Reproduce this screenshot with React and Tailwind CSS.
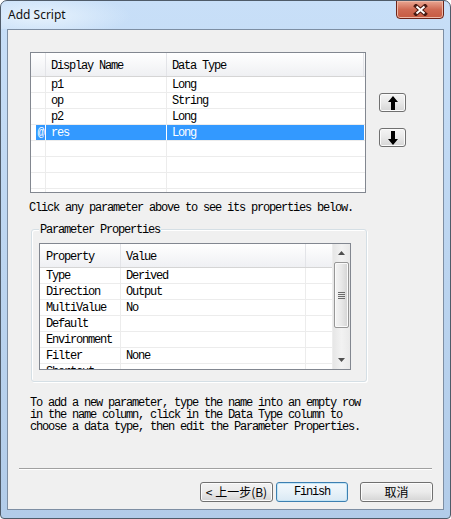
const mono = "font-['Liberation_Mono','Noto_Sans_CJK_SC',monospace] text-[12px] tracking-[-1.2px] text-black"

const params = [
  { name: 'p1', type: 'Long' },
  { name: 'op', type: 'String' },
  { name: 'p2', type: 'Long' },
  { name: 'res', type: 'Long', selected: true },
  {},
  {},
  {},
  {},
]

const props = [
  ['Type', 'Derived'],
  ['Direction', 'Output'],
  ['MultiValue', 'No'],
  ['Default', ''],
  ['Environment', ''],
  ['Filter', 'None'],
  ['Shortcut', ''],
]

function Arrow({ down }) {
  return (
    <svg width="10" height="14" viewBox="0 0 10 14" className={down ? 'rotate-180' : ''}>
      <polygon points="5,0 10,6 7,6 7,14 3,14 3,6 0,6" fill="#000" />
    </svg>
  )
}

function MoveButton({ down }) {
  return (
    <div className="w-[27px] h-[19px] rounded-[3px] border border-[#707070] bg-linear-to-b from-[#f4f4f4] via-[#e8e8e8] to-[#d6d6d6] shadow-[inset_0_0_0_1px_#fbfbfb] flex items-center justify-center">
      <Arrow down={down} />
    </div>
  )
}

function ParamGrid() {
  return (
    <div className="w-[336px] h-[141px] border border-[#828790] bg-white overflow-hidden">
      <div className="flex h-[24px] border-b border-[#d5d5d5] bg-linear-to-b from-white to-[#eff0f3]">
        <div className="w-[15px] border-r border-[#e3e4e8]" />
        <div className="w-[121px] border-r border-[#e3e4e8] pl-[5px] pt-[3px] flex items-center">Display Name</div>
        <div className="flex-1 pl-[5px] pt-[3px] flex items-center border-r border-[#e3e4e8] mr-[1px]">Data Type</div>
      </div>
      {params.map((p, i) => (
        <div key={i} className="flex h-[16px] border-b border-[#ececec]">
          <div className={`w-[15px] border-r flex justify-end ${p.selected ? 'border-white' : 'border-[#ececec]'}`}>
            {p.selected && (
              <span className="w-[9px] bg-[#3399ff] text-white leading-[17px] flex justify-center">@</span>
            )}
          </div>
          <div className={`w-[121px] border-r pl-[5px] leading-[17px] ${p.selected ? 'bg-[#3399ff] text-white border-white' : 'border-[#ececec]'}`}>
            {p.name}
          </div>
          <div className={`flex-1 mr-[1px] pl-[5px] leading-[17px] ${p.selected ? 'bg-[#3399ff] text-white' : ''}`}>
            {p.type}
          </div>
        </div>
      ))}
    </div>
  )
}

function ScrollBar() {
  return (
    <div className="w-[18px] h-full flex flex-col items-center bg-linear-to-r from-[#e6e6e6] via-[#f2f2f2] to-[#e9e9e9] border-l border-[#ededed]">
      <div className="h-[18px] flex items-center justify-center">
        <svg width="7" height="4" viewBox="0 0 7 4"><polygon points="3.5,0 7,4 0,4" fill="#4f4f4f" /></svg>
      </div>
      <div className="w-[15px] h-[66px] rounded-[2px] border border-[#979797] bg-linear-to-r from-[#f4f4f4] via-[#e8e8e8] to-[#d4d4d4] shadow-[inset_0_0_0_1px_#fafafa] flex flex-col items-center justify-center gap-[1px]">
        {[0, 1, 2, 3].map((i) => (
          <div key={i} className="w-[7px] h-[1px] bg-[#6b6b6b]" />
        ))}
      </div>
      <div className="flex-1" />
      <div className="h-[18px] flex items-center justify-center">
        <svg width="7" height="4" viewBox="0 0 7 4"><polygon points="0,0 7,0 3.5,4" fill="#4f4f4f" /></svg>
      </div>
    </div>
  )
}

function PropGrid() {
  return (
    <div className="w-[312px] h-[127px] border border-[#828790] bg-white overflow-hidden flex">
      <div className="flex-1">
        <div className="flex h-[24px] border-b border-[#d5d5d5] bg-linear-to-b from-white to-[#eff0f3]">
          <div className="w-[81px] border-r border-[#e3e4e8] pl-[6px] pt-[3px] flex items-center">Property</div>
          <div className="w-[185px] border-r border-[#e3e4e8] pl-[5px] pt-[3px] flex items-center">Value</div>
          <div className="flex-1" />
        </div>
        {props.map(([k, v], i) => (
          <div key={i} className="flex h-[16px] border-b border-[#ececec]">
            <div className="w-[81px] border-r border-[#ececec] pl-[6px] leading-[17px]">{k}</div>
            <div className="w-[185px] border-r border-[#ececec] pl-[5px] leading-[17px]">{v}</div>
            <div className="flex-1" />
          </div>
        ))}
      </div>
      <ScrollBar />
    </div>
  )
}

function DlgButton({ children, focused, className = '' }) {
  return (
    <div
      className={`h-[20px] rounded-[3px] border flex items-center justify-center ${
        focused
          ? 'border-[#3c7fb1] bg-linear-to-b from-[#f2f8fc] via-[#e8f2f9] to-[#d9e9f4] shadow-[inset_0_0_0_1px_#c4e5f6]'
          : 'border-[#707070] bg-linear-to-b from-[#f2f2f2] via-[#ebebeb] to-[#d4d4d4] shadow-[inset_0_0_0_1px_#fcfcfc]'
      } ${className}`}
    >
      {children}
    </div>
  )
}

export default function App() {
  return (
    <div className="w-[451px] h-[519px] flex flex-col rounded-t-[7px] rounded-b-[4px] border border-[#4f5b69] bg-linear-to-b from-[#c8dff8] via-[#bcd5f0] to-[#b2cce9] overflow-hidden">
      {/* title bar */}
      <div className="h-[28px] flex items-start bg-[radial-gradient(ellipse_90px_22px_at_40px_15px,#e6f2fd,transparent)]">
        <div className="pl-[7px] pt-[6px] font-['Noto_Sans',sans-serif] text-[12px] leading-[16px] text-[#111]">Add Script</div>
        <div className="ml-auto mr-[6px] -mt-px w-[48px] h-[19px] rounded-b-[4px] border border-[#6e2418] bg-linear-to-b from-[#e9a692] via-[#cf6a53] to-[#c65a40] shadow-[inset_0_0_0_1px_#eeb8a6] flex items-center justify-center">
          <svg width="15" height="12" viewBox="0 0 15 12">
            <path d="M3 2 L12 10 M12 2 L3 10" stroke="#4a1a12" strokeWidth="4" strokeLinecap="square" />
            <path d="M3.5 2.5 L11.5 9.5 M11.5 2.5 L3.5 9.5" stroke="#fff" strokeWidth="2" />
          </svg>
        </div>
      </div>

      {/* client area */}
      <div className={`mx-[6px] h-[481px] border border-[#7d8ea3] bg-[#f0f0f0] flex flex-col ${mono}`}>
        <div className="flex pl-[22px] pt-[22px]">
          <ParamGrid />
          <div className="ml-[13px] pt-[41px] flex flex-col gap-[16px]">
            <MoveButton />
            <MoveButton down />
          </div>
        </div>

        <div className="pl-[21px] mt-[9px] leading-[12px]">Click any parameter above to see its properties below.</div>

        <div className="relative ml-[23px] mt-[15px] w-[336px] h-[153px] rounded-[3px] border border-[#d5dfe5] shadow-[inset_1px_1px_0_#fff,1px_1px_0_#fff] pl-[7px] pt-[13px]">
          <div className="absolute -top-[6px] left-[7px] px-[1px] bg-[#f0f0f0] leading-[12px]">Parameter Properties</div>
          <PropGrid />
        </div>

        <div className="pl-[22px] mt-[15px] leading-[12px]">
          <div>To add a new parameter, type the name into an empty row</div>
          <div>in the name column, click in the Data Type column to</div>
          <div>choose a data type, then edit the Parameter Properties.</div>
        </div>

        <div className="flex-1" />

        <div className="ml-[11px] w-[413px] border-t border-b border-t-[#a0a0a0] border-b-white" />

        <div className="flex justify-end pr-[10px] mt-[12px] mb-[7px]">
          <DlgButton className="w-[73px] tracking-normal font-['Noto_Sans_CJK_SC',sans-serif]">
            <span className="leading-[16px]">&lt; 上一步(B)</span>
          </DlgButton>
          <DlgButton focused className="w-[72px] ml-[3px]">Finish</DlgButton>
          <DlgButton className="w-[73px] ml-[12px] tracking-normal font-['Noto_Sans_CJK_SC',sans-serif]">
            <span className="leading-[16px]">取消</span>
          </DlgButton>
        </div>
      </div>
    </div>
  )
}
